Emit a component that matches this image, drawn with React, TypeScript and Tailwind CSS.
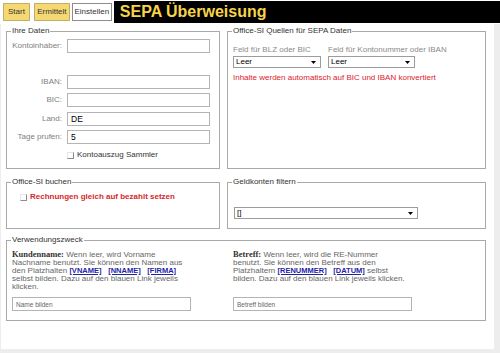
import React from 'react';

type BoxProps = { title: string; className?: string; children?: React.ReactNode };

const Box: React.FC<BoxProps> = ({ title, className = '', children }) => (
    <fieldset className={`border border-[#a9a9a9] px-[5px] min-w-0 ${className}`}>
        <legend className="-ml-[1px] px-[1px] leading-[10px] text-[#333]">{title}</legend>
        {children}
    </fieldset>
);

const TextInput: React.FC<{ value?: string; placeholder?: string; className?: string }> = ({ value, placeholder, className = '' }) => (
    <input
        readOnly
        defaultValue={value}
        placeholder={placeholder}
        className={`h-[14px] border border-[#b4b4b4] bg-white px-[3px] text-black outline-none placeholder:text-[#666] ${className}`}
    />
);

const FakeSelect: React.FC<{ value: string; className?: string }> = ({ value, className = '' }) => (
    <div className={`h-[12px] border border-[#9c9c9c] bg-white flex items-center justify-between pl-[2px] pr-[4px] text-black ${className}`}>
        <span className="leading-none">{value}</span>
        <svg width="5" height="3" viewBox="0 0 5 3"><path d="M0 0h5L2.5 3z" fill="#000" /></svg>
    </div>
);

const Checkbox = () => (
    <span className="inline-block w-[7px] h-[7px] border border-t-[#e6e6e6] border-l-[#e6e6e6] border-r-[#8c8c8c] border-b-[#8c8c8c] bg-white" />
);

const Row: React.FC<{ label: string; value?: string; className?: string }> = ({ label, value, className = '' }) => (
    <div className={`flex items-center h-[14px] ${className}`}>
        <span className="w-[50px] text-right text-[#808080] whitespace-nowrap">{label}</span>
        <TextInput value={value} className="ml-[5px] w-[143px] text-[8.5px]" />
    </div>
);

const Link: React.FC<{ children: React.ReactNode }> = ({ children }) => (
    <a className="font-bold underline text-[#1f24a6] text-[7.5px] cursor-pointer">{children}</a>
);

export default function App() {
    return (
        <div className="w-[500px] h-[353px] bg-[#ededed] overflow-hidden font-['Liberation_Sans',Arial,sans-serif] text-[8px] text-[#555]">
            {/* Kopfzeile mit Tabs */}
            <header className="h-[24px] bg-white flex items-start">
                <button className="mt-[3px] ml-[3px] w-[27px] h-[18px] bg-[#f6d873] border border-[#bfae6c] text-[#333]">Start</button>
                <button className="mt-[3px] ml-[4px] w-[36px] h-[18px] bg-[#f6d873] border border-[#bfae6c] text-[#333]">Ermittelt</button>
                <button className="mt-[3px] ml-[2px] w-[40px] h-[18px] bg-white border border-[#8d8d8d] text-[#333]">Einstellen</button>
                <div className="mt-[1px] ml-[2px] w-[387px] h-[22px] bg-black flex items-center pl-[6px]">
                    <span className="text-[16px] font-bold text-[#f7d449] leading-none">SEPA Überweisung</span>
                </div>
            </header>

            <main className="ml-[1px] w-[493px] h-[325px] bg-white pl-[5px] pt-[2px]">
                <div className="flex gap-[7px]">
                    <Box title="Ihre Daten" className="w-[214px] h-[143px]">
                        <Row label="Kontoinhaber:" className="mt-[3px]" />
                        <Row label="IBAN:" className="mt-[22px]" />
                        <Row label="BIC:" className="mt-[4px]" />
                        <Row label="Land:" value="DE" className="mt-[5px]" />
                        <Row label="Tage prufen:" value="5" className="mt-[4px]" />
                        <label className="flex items-center gap-[3px] ml-[55px] mt-[6px] h-[10px] text-[#333]">
                            <Checkbox />
                            Kontoauszug Sammler
                        </label>
                    </Box>

                    <Box title="Office-SI Quellen für SEPA Daten" className="w-[259px] h-[143px]">
                        <div className="flex gap-[7px] mt-[9px]">
                            <div className="w-[88px]">
                                <div className="text-[#8a8a8a] whitespace-nowrap leading-[10px]">Feld für BLZ oder BIC</div>
                                <FakeSelect value="Leer" className="mt-[1px]" />
                            </div>
                            <div className="w-[87px]">
                                <div className="text-[#8a8a8a] whitespace-nowrap leading-[10px]">Feld für Kontonummer oder IBAN</div>
                                <FakeSelect value="Leer" className="mt-[1px]" />
                            </div>
                        </div>
                        <p className="mt-[5px] text-[#e0202a] leading-[10px]">Inhalte werden automatisch auf BIC und IBAN konvertiert</p>
                    </Box>
                </div>

                <div className="flex gap-[7px] mt-[8px]">
                    <Box title="Office-SI buchen" className="w-[214px] h-[52px]">
                        <label className="flex items-center gap-[3px] ml-[8px] mt-[4px] text-[#d81f2a] font-bold">
                            <Checkbox />
                            Rechnungen gleich auf bezahlt setzen
                        </label>
                    </Box>
                    <Box title="Geldkonten filtern" className="w-[259px] h-[52px]">
                        <FakeSelect value="[]" className="w-[184px] ml-[1px] mt-[20px]" />
                    </Box>
                </div>

                <Box title="Verwendungszweck" className="w-[480px] h-[86px] mt-[6px]">
                    <div className="flex">
                        <div className="w-[221px]">
                            <p className="text-[8px] leading-[8px] mt-[5px] h-[40px] text-[#666]">
                                <b className="font-['Liberation_Serif',serif] text-[8.5px] text-[#333]">Kundenname:</b> Wenn leer, wird Vorname<br />
                                Nachname benutzt. Sie können den Namen aus<br />
                                den Platzhalten <Link>[VNAME]</Link>&nbsp;&nbsp; <Link>[NNAME]</Link>&nbsp;&nbsp; <Link>[FIRMA]</Link><br />
                                selbst bilden. Dazu auf den blauen Link jeweils<br />
                                klicken.
                            </p>
                            <TextInput placeholder="Name bilden" className="w-[179px] mt-[7px] text-[6.5px]" />
                        </div>
                        <div className="flex-1">
                            <p className="text-[8px] leading-[8px] mt-[5px] h-[40px] text-[#666]">
                                <b className="font-['Liberation_Serif',serif] text-[8.5px] text-[#333]">Betreff:</b> Wenn leer, wird die RE-Nummer<br />
                                benutzt. Sie können den Betreff aus den<br />
                                Platzhaltern <Link>[RENUMMER]</Link>&nbsp;&nbsp; <Link>[DATUM]</Link> selbst<br />
                                bilden. Dazu auf den blauen Link jeweils klicken.
                            </p>
                            <TextInput placeholder="Betreff bilden" className="w-[179px] mt-[7px] text-[6.5px]" />
                        </div>
                    </div>
                </Box>
            </main>
        </div>
    );
}
